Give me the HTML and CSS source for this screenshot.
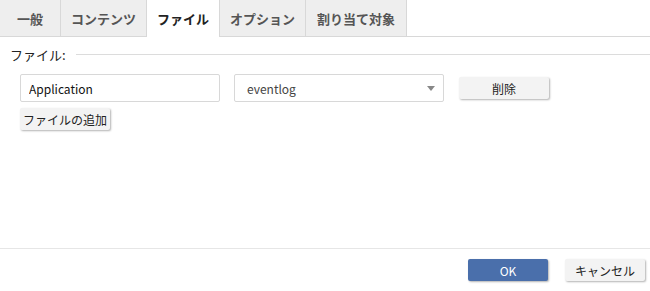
FILE: index.html
```html
<!DOCTYPE html>
<html lang="ja">
<head>
    <meta charset="UTF-8">
    <meta name="viewport" content="width=device-width, initial-scale=1.0">
    <title>ファイル</title>
    <link rel="stylesheet" href="styles.css">
</head>
<body>
    <div class="dialog">
        <ul class="tabs">
            <li class="tab">一般</li>
            <li class="tab">コンテンツ</li>
            <li class="tab active">ファイル</li>
            <li class="tab">オプション</li>
            <li class="tab tab-wide">割り当て対象</li>
        </ul>

        <div class="content">
            <div class="legend">
                <span class="legend-text">ファイル:</span>
                <span class="legend-line"></span>
            </div>

            <div class="file-row">
                <input type="text" class="text-input" value="Application">
                <div class="select-box">
                    <span>eventlog</span>
                    <span class="select-arrow"></span>
                </div>
                <button class="btn btn-delete">削除</button>
            </div>
            <button class="btn btn-add">ファイルの追加</button>
        </div>

        <div class="footer">
            <button class="btn btn-primary">OK</button>
            <button class="btn btn-cancel">キャンセル</button>
        </div>
    </div>
</body>
</html>
```

FILE: styles.css
```css
body {
    margin: 0;
    font-family: "Noto Sans CJK JP", "DejaVu Sans", sans-serif;
    font-size: 12px;
    color: #333;
    background: #fff;
}
.dialog {
    display: flex;
    flex-direction: column;
    height: 100vh;
}
.tabs {
    display: flex;
    margin: 0;
    padding: 0;
    list-style: none;
    height: 36px;
    border-bottom: 1px solid #d8d8d8;
}
.tab {
    display: flex;
    align-items: center;
    justify-content: center;
    min-width: 40px;
    padding: 0 10px;
    background: #eeeeee;
    border-right: 1px solid #d8d8d8;
    font-size: 13px;
    font-weight: bold;
    color: #555;
}
.tab-wide {
    padding: 0 11px;
}
.tab.active {
    background: #fff;
    color: #222;
    height: 37px;
}
.content {
    flex: 1;
    padding: 10px 0 0 10px;
}
.legend {
    display: flex;
    align-items: center;
    margin-bottom: 12px;
    font-size: 13px;
    line-height: 15px;
    color: #222;
}
.legend-text {
    padding-right: 10px;
}
.legend-line {
    flex: 1;
    border-top: 1px solid #dcdcdc;
}
.file-row {
    display: flex;
    align-items: center;
    margin-left: 10px;
}
.text-input {
    width: 200px;
    height: 28px;
    box-sizing: border-box;
    border: 1px solid #d8d8d8;
    border-radius: 2px;
    padding: 0 8px;
    font-family: inherit;
    font-size: 12px;
    color: #111;
    outline: none;
}
.select-box {
    display: flex;
    align-items: center;
    justify-content: space-between;
    width: 210px;
    height: 28px;
    box-sizing: border-box;
    margin-left: 14px;
    padding: 0 8px 0 12px;
    border: 1px solid #d8d8d8;
    border-radius: 2px;
    color: #444;
}
.select-arrow {
    width: 0;
    height: 0;
    border-left: 4px solid transparent;
    border-right: 4px solid transparent;
    border-top: 5px solid #888;
}
.btn {
    height: 22px;
    width: 90px;
    padding: 0;
    border: none;
    border-radius: 2px;
    background: #f3f3f3;
    box-shadow: 1px 1px 2px rgba(0, 0, 0, 0.3);
    font-family: inherit;
    font-size: 12px;
    color: #222;
    cursor: pointer;
}
.btn-delete {
    margin-left: 15px;
}
.btn-add {
    margin: 6px 0 0 10px;
}
.footer {
    display: flex;
    justify-content: flex-end;
    gap: 17px;
    height: 43px;
    padding: 10px 5px 0 0;
    box-sizing: border-box;
    border-top: 1px solid #e6e6e6;
}
.btn-primary {
    width: 80px;
    background: #4a6fab;
    color: #fff;
}
.btn-cancel {
    width: 80px;
}
```
